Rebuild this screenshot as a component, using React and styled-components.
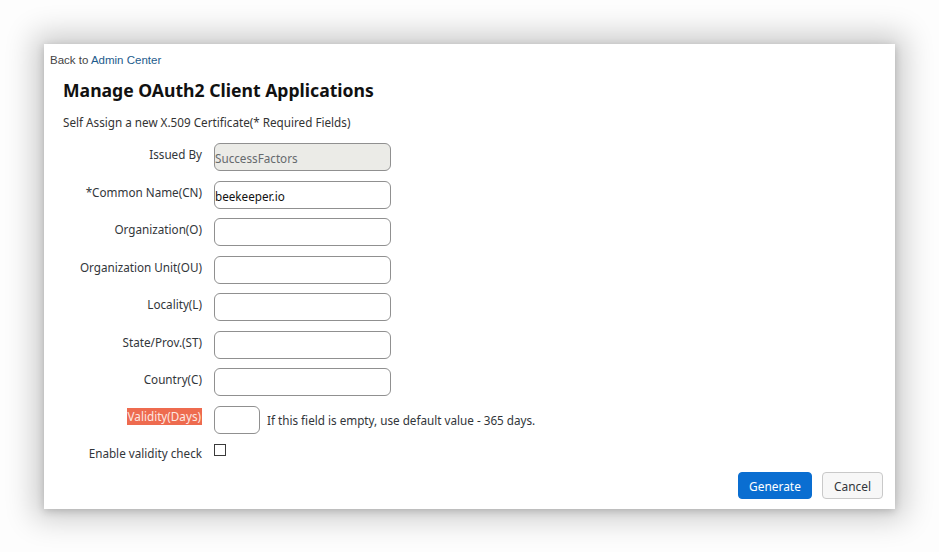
import React from "react"
import styled, { createGlobalStyle } from "styled-components"

const GlobalStyle = createGlobalStyle`
  html, body {
    margin: 0;
    padding: 0;
    background: #fdfdfd;
  }
  body {
    font-family: "Noto Sans", "Open Sans", Arial, sans-serif;
    color: #32363a;
  }
`

const Page = styled.div`
  width: 939px;
  height: 552px;
  padding: 44px 0 0 44px;
  box-sizing: border-box;
  overflow: hidden;
`

const Card = styled.div`
  width: 851px;
  height: 465px;
  background: #fff;
  box-shadow: 0 0 28px 10px rgba(0, 0, 0, 0.2), 0 2px 8px rgba(0, 0, 0, 0.18);
  box-sizing: border-box;
  padding: 9px 12px 10px 6px;
  display: flex;
  flex-direction: column;
`

const BackLink = styled.div`
  font-family: "Liberation Sans", Arial, sans-serif;
  font-size: 11.5px;
  color: #444;
  line-height: 14px;

  a {
    color: #1d5b8c;
    text-decoration: none;
  }
`

const Title = styled.h1`
  margin: 11px 0 0 13px;
  font-size: 17.6px;
  font-weight: 700;
  color: #111;
  line-height: 24px;
`

const Subtitle = styled.p`
  margin: 12px 0 0 13px;
  font-size: 11.7px;
  line-height: 16px;
  color: #333;
`

const Form = styled.div`
  margin: 13px 0 0 0;
  display: grid;
  grid-template-columns: 152px auto;
  column-gap: 12px;
  row-gap: 9.5px;
  align-items: start;
  justify-items: start;
`

const Label = styled.label`
  justify-self: end;
  font-size: 11.7px;
  line-height: 17px;
  padding-top: ${p => (p.$compact ? "2px" : "3px")};
  color: #32363a;
  white-space: nowrap;

  ${p =>
    p.$error &&
    `
    background: #ee6b4f;
    color: #fde8e2;
    padding: 0 1px;
    margin-top: 2px;
  `}
`

const Input = styled.div`
  width: ${p => p.$width || 177}px;
  height: 28px;
  box-sizing: border-box;
  border: 1px solid #909090;
  border-radius: 6px;
  background: ${p => (p.$disabled ? "#ebebe7" : "#fff")};
  color: ${p => (p.$disabled ? "#666a6d" : "#111")};
  font-size: 11.7px;
  display: flex;
  align-items: center;
  padding: 2px 0 0 0;
`

const InlineField = styled.div`
  display: flex;
  align-items: center;
  gap: 7px;
  font-size: 11.7px;
  color: #32363a;
`

const Checkbox = styled.div`
  width: 12px;
  height: 12px;
  box-sizing: border-box;
  border: 1.5px solid #3a3a3a;
  background: #fff;
  margin-top: 1px;
`

const Footer = styled.div`
  margin-top: auto;
  display: flex;
  justify-content: flex-end;
  gap: 10px;
`

const Button = styled.button`
  height: 27px;
  width: ${p => (p.$primary ? 74 : 61)}px;
  padding: 0;
  border-radius: 4px;
  font-family: "Noto Sans", "Open Sans", Arial, sans-serif;
  font-size: 11.9px;
  border: 1px solid ${p => (p.$primary ? "#0a6ed1" : "#c9c9c9")};
  background: ${p => (p.$primary ? "#0a6ed1" : "#f7f7f7")};
  color: ${p => (p.$primary ? "#fff" : "#32363a")};
`

const fields = [
  { label: "Organization(O)" },
  { label: "Organization Unit(OU)" },
  { label: "Locality(L)" },
  { label: "State/Prov.(ST)" },
  { label: "Country(C)" },
]

export default function App() {
  return (
    <>
      <GlobalStyle />
      <Page>
        <Card>
          <BackLink>
            Back to <a href="#">Admin Center</a>
          </BackLink>
          <Title>Manage OAuth2 Client Applications</Title>
          <Subtitle>Self Assign a new X.509 Certificate(* Required Fields)</Subtitle>
          <Form>
            <Label>Issued By</Label>
            <Input $disabled>SuccessFactors</Input>

            <Label>*Common Name(CN)</Label>
            <Input>beekeeper.io</Input>

            {fields.map(f => (
              <React.Fragment key={f.label}>
                <Label>{f.label}</Label>
                <Input />
              </React.Fragment>
            ))}

            <Label $error>Validity(Days)</Label>
            <InlineField>
              <Input $width={46} />
              <span>If this field is empty, use default value - 365 days.</span>
            </InlineField>

            <Label $compact>Enable validity check</Label>
            <Checkbox />
          </Form>
          <Footer>
            <Button $primary>Generate</Button>
            <Button>Cancel</Button>
          </Footer>
        </Card>
      </Page>
    </>
  )
}
